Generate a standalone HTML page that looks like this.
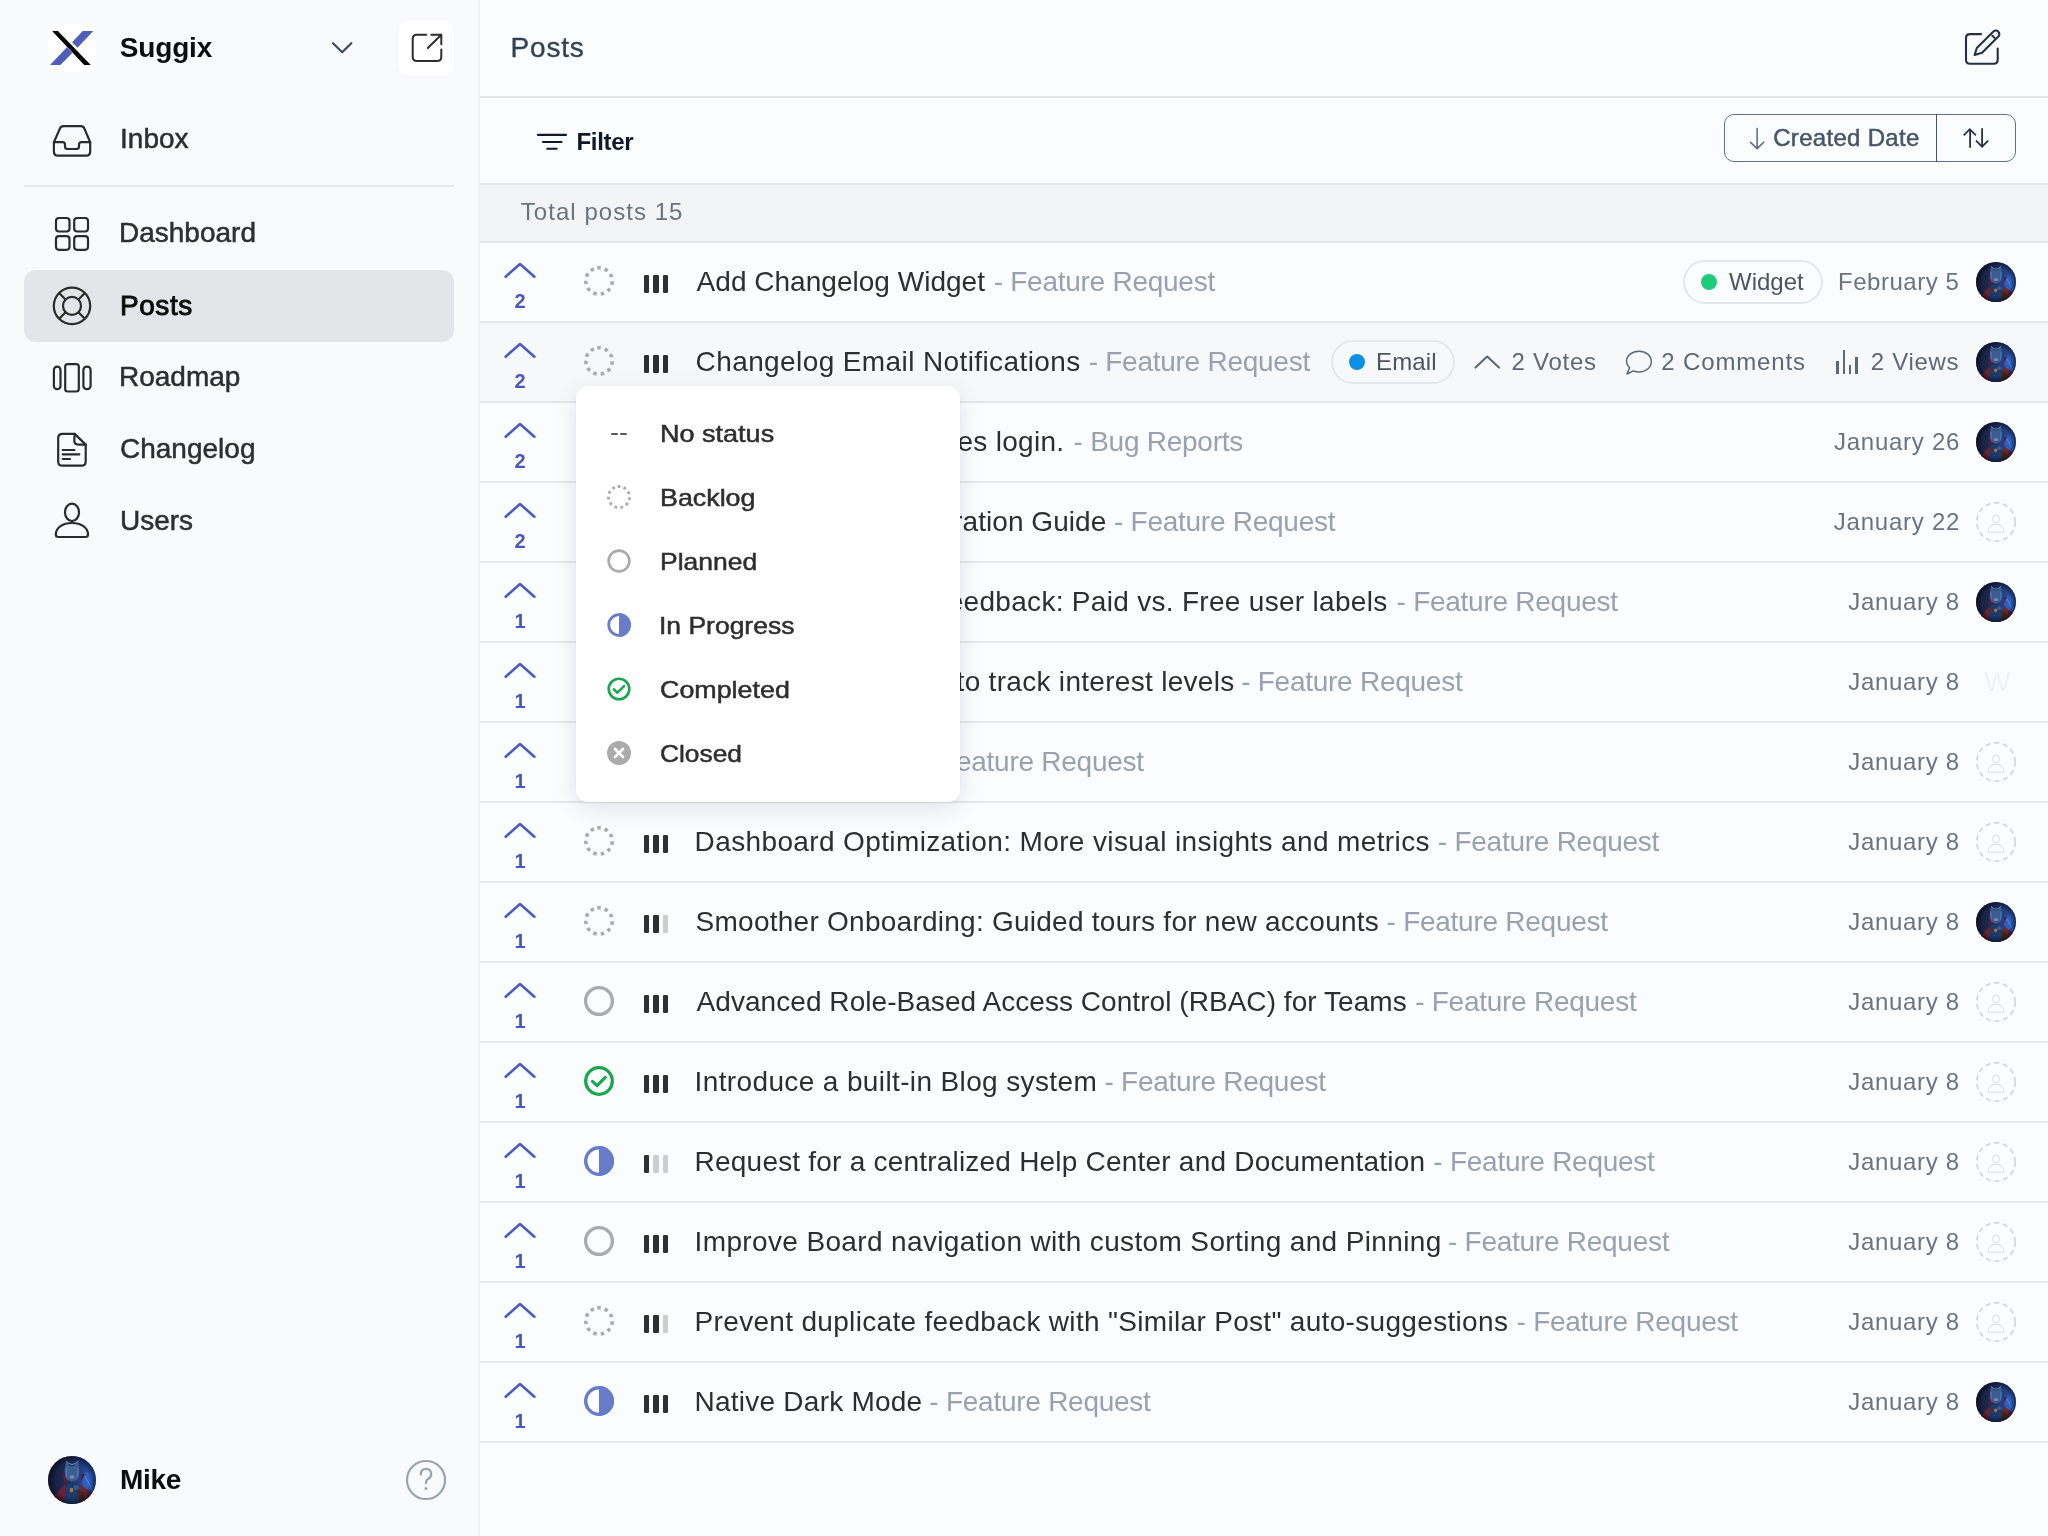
<!DOCTYPE html>
<html><head><meta charset="utf-8"><title>Posts</title>
<style>
*{margin:0;padding:0;box-sizing:border-box}
html,body{width:2048px;height:1536px;overflow:hidden}
body{font-family:"Liberation Sans",sans-serif;background:#fbfcfe;position:relative;color:#333}
.abs{position:absolute}
.t{position:absolute;white-space:nowrap;line-height:1;font-family:"Liberation Sans",sans-serif}
svg{position:absolute;overflow:visible}
.hl{position:absolute;left:480px;width:1568px;height:2px;background:#e5e7eb}
</style></head>
<body><div id="root" style="position:absolute;left:0;top:0;width:2048px;height:1536px;will-change:transform">
<div class="abs" style="left:0;top:0;width:478px;height:1536px;background:#f9fafb"></div>
<div class="abs" style="left:478px;top:0;width:2px;height:1536px;background:#f1f2f4"></div>
<div class="abs" style="left:48px;top:24px;width:48px;height:48px;background:#fff;border-radius:8px"></div>
<svg style="left:0;top:0" width="120" height="90" viewBox="0 0 120 90"><polygon points="52.1,31 57.9,31 90.8,65 84.2,65" fill="#000"/><polygon points="82.7,31 93.3,31 77.5,47.7 72.1,42.25" fill="#4c5fb9"/><polygon points="66.9,47.25 72.3,52.9 60.4,65 50,65" fill="#4c5fb9"/></svg>
<div class="t" style="left:119.70px;top:34px;font-size:28px;font-weight:bold;color:#0d0d0d;letter-spacing:-0.140px;">Suggix</div>
<svg style="left:0;top:0" width="400" height="80"><polyline points="333,43.2 342.2,52.3 351.3,43.2" fill="none" stroke="#3f4b5e" stroke-width="2.2" stroke-linecap="round" stroke-linejoin="round"/></svg>
<div class="abs" style="left:398px;top:20px;width:56px;height:56px;background:#fff;border-radius:10px;box-shadow:0 0 3px rgba(0,0,0,0.05)"></div>
<svg style="left:390px;top:12px" width="72" height="72" viewBox="0 0 72 72" fill="none" stroke="#2e2e2e" stroke-width="2" stroke-linecap="round" stroke-linejoin="round"><path d="M36.3 22.8 L27 22.8 Q22.7 22.8 22.7 27.1 L22.7 44.7 Q22.7 49 27 49 L47 49 Q51.3 49 51.3 44.7 L51.3 37.5"/><path d="M41.3 22.8 L51.3 22.8 L51.3 32.3 M51.3 22.8 L37.8 36"/></svg>
<svg style="left:40px;top:110px" width="60" height="60" viewBox="0 0 60 60" fill="none" stroke="#2b2b2b" stroke-width="2.2" stroke-linecap="round" stroke-linejoin="round"><path d="M13.9 32.2 L20 18.4 Q21 16.2 23.5 16.2 L41 16.2 Q43.4 16.2 44.3 18.4 L50.2 32.2 L50.2 41.5 Q50.2 45.7 46 45.7 L18 45.7 Q13.9 45.7 13.9 41.5 Z"/><path d="M13.9 32.2 L22.5 32.2 Q25 32.2 25 34.7 L25 36.5 Q25 39 27.5 39 L36.5 39 Q39 39 39 36.5 L39 34.7 Q39 32.2 41.5 32.2 L50.2 32.2"/></svg>
<div class="t" style="left:120.10px;top:125px;font-size:28px;-webkit-text-stroke:0.5px #2e2e2e;color:#2e2e2e;letter-spacing:0.000px;">Inbox</div>
<div class="abs" style="left:24px;top:185px;width:430px;height:2px;background:#e5e7eb"></div>
<svg style="left:40px;top:200px" width="60" height="60" viewBox="0 0 60 60" fill="none" stroke="#2b2b2b" stroke-width="2.2"><rect x="16" y="18" width="13.5" height="13.5" rx="3"/><rect x="34.2" y="18" width="13.8" height="13.5" rx="3"/><rect x="16" y="36.2" width="13.5" height="13.6" rx="3"/><rect x="34.2" y="36.2" width="13.8" height="13.6" rx="3"/></svg>
<div class="t" style="left:119.00px;top:219px;font-size:28px;-webkit-text-stroke:0.5px #2e2e2e;color:#2e2e2e;letter-spacing:0.000px;">Dashboard</div>
<div class="abs" style="left:24px;top:270px;width:430px;height:72px;background:#e4e5e9;border-radius:12px"></div>
<svg style="left:40px;top:276px" width="60" height="60" viewBox="0 0 60 60" fill="none" stroke="#2b2b2b" stroke-width="2.2"><circle cx="32" cy="29.9" r="18.2"/><circle cx="32" cy="29.9" r="9"/><path d="M25.6 23.5 L19.1 17 M38.4 23.5 L44.9 17 M25.6 36.3 L19.1 42.8 M38.4 36.3 L44.9 42.8"/></svg>
<div class="t" style="left:120.00px;top:292px;font-size:28px;-webkit-text-stroke:0.9px #0a0a0a;color:#0a0a0a;letter-spacing:0.550px;">Posts</div>
<svg style="left:40px;top:348px" width="60" height="60" viewBox="0 0 60 60" fill="none" stroke="#2b2b2b" stroke-width="2.2"><rect x="13.9" y="18.6" width="6.6" height="22.6" rx="3.3"/><rect x="25.2" y="16.2" width="13.6" height="27.3" rx="2.5"/><rect x="43.4" y="18.6" width="7.2" height="22.6" rx="3.4"/></svg>
<div class="t" style="left:119.00px;top:363px;font-size:28px;-webkit-text-stroke:0.5px #2e2e2e;color:#2e2e2e;letter-spacing:0.000px;">Roadmap</div>
<svg style="left:40px;top:420px" width="60" height="60" viewBox="0 0 60 60" fill="none" stroke="#2b2b2b" stroke-width="2.2" stroke-linecap="round" stroke-linejoin="round"><path d="M34.7 13.9 L22.5 13.9 Q18.2 13.9 18.2 18.2 L18.2 41.4 Q18.2 45.7 22.5 45.7 L41.4 45.7 Q45.7 45.7 45.7 41.4 L45.7 24.6 Z"/><path d="M34.7 13.9 L34.3 20.5 Q34.3 24.6 38.4 24.6 L45.7 24.6"/><path d="M22.7 30 L34.4 30 M22.7 34.4 L39.3 34.4 M22.7 39 L30 39"/></svg>
<div class="t" style="left:120.00px;top:435px;font-size:28px;-webkit-text-stroke:0.5px #2e2e2e;color:#2e2e2e;letter-spacing:0.000px;">Changelog</div>
<svg style="left:40px;top:492px" width="60" height="60" viewBox="0 0 60 60" fill="none" stroke="#2b2b2b" stroke-width="2.2" stroke-linejoin="round"><ellipse cx="32" cy="20.4" rx="7" ry="8.7"/><path d="M15.8 42.5 C15.8 35.5 23 31 32 31 C41 31 48 35.5 48 42.5 Q48 45 45.5 45 L18.3 45 Q15.8 45 15.8 42.5 Z"/></svg>
<div class="t" style="left:120.00px;top:507px;font-size:28px;-webkit-text-stroke:0.5px #2e2e2e;color:#2e2e2e;letter-spacing:0.000px;">Users</div>
<svg style="left:48px;top:1456px" width="48" height="48" viewBox="0 0 48 48"><defs><clipPath id="cme"><circle cx="24" cy="24" r="24"/></clipPath><linearGradient id="gme" x1="0" y1="0" x2="1" y2="0.2"><stop offset="0" stop-color="#141a32"/><stop offset="0.5" stop-color="#1e2b55"/><stop offset="1" stop-color="#2d5cc0"/></linearGradient><radialGradient id="vme" cx="0.5" cy="0.5" r="0.5"><stop offset="0.7" stop-color="#050816" stop-opacity="0"/><stop offset="1" stop-color="#050816" stop-opacity="0.6"/></radialGradient><filter id="fme" x="-20%" y="-20%" width="140%" height="140%"><feGaussianBlur stdDeviation="0.45"/></filter></defs><g clip-path="url(#cme)"><rect width="48" height="48" fill="url(#gme)"/><g filter="url(#fme)"><ellipse cx="40" cy="25" rx="6" ry="9" fill="#2f66cc" opacity="0.7"/><path d="M37 20 L45 35" stroke="#5ab0f0" stroke-width="1" opacity="0.7"/><path d="M5 42 L17 28 L21 48 L6 48 Z" fill="#6a2232"/><path d="M32 28 L44 37 L42 48 L33 48 Z" fill="#6c2536"/><path d="M15 17 L19 18 L20 27 L16 26 Z M33 18 L37 18 L33 26 Z" fill="#5e1f2e"/><path d="M18 4 L21.5 10 L26.5 10 L30 4 L31.5 15 L30 23 L24 26 L18 23 L16.5 15 Z" fill="#3d5d92"/><path d="M18 5 Q24 12 30.5 5" stroke="#62c0ff" stroke-width="0.9" fill="none" opacity="0.85"/><path d="M18.3 12 L18.3 21 M29.8 12 L29.8 21" stroke="#3fa0f0" stroke-width="0.9" opacity="0.7"/><ellipse cx="24" cy="21" rx="2.6" ry="1.8" fill="#a8a0b0" opacity="0.6"/><path d="M18 28 L31 28 L32 48 L16 48 Z" fill="#1f3a6c"/><path d="M30 34 L36 36 L37 46 L31 46 Z" fill="#4a2614"/><ellipse cx="23.5" cy="34" rx="1.8" ry="2.2" fill="#a87a48"/><ellipse cx="28" cy="31.5" rx="2.8" ry="2.4" fill="#37598f"/></g><rect width="48" height="48" fill="url(#vme)"/></g></svg>
<div class="t" style="left:120.00px;top:1466px;font-size:28px;font-weight:bold;color:#0d0d0d;letter-spacing:-0.267px;">Mike</div>
<svg style="left:400px;top:1454px" width="52" height="52" viewBox="0 0 52 52" fill="none" stroke="#9ba3af" stroke-width="2.2" stroke-linecap="round"><circle cx="26" cy="26" r="19"/><path d="M20.8 20.6 Q20.8 14.8 26 14.8 Q31.2 14.8 31.2 20.2 Q31.2 23.4 28 25 Q26 26 26 29"/><circle cx="26" cy="34.6" r="1.5" fill="#9ba3af" stroke="none"/></svg>
<div class="t" style="left:510.50px;top:34px;font-size:28px;-webkit-text-stroke:0.35px #334155;color:#334155;letter-spacing:0.825px;">Posts</div>
<svg style="left:1950px;top:16px" width="64" height="64" viewBox="0 0 64 64" fill="none" stroke="#253042" stroke-width="2.1" stroke-linecap="round" stroke-linejoin="round"><path d="M31 18.1 L20 18.1 Q16 18.1 16 22.1 L16 43.7 Q16 47.7 20 47.7 L43.7 47.7 Q47.7 47.7 47.7 43.7 L47.7 32.5"/><path d="M24.6 39 L26.8 32 L43.4 15.6 A3.3 3.3 0 0 1 48.3 20.6 L32 36.8 Z"/><path d="M42.4 19.8 L44.4 21.8"/></svg>
<div class="hl" style="top:96px"></div>
<svg style="left:526px;top:120px" width="50" height="44" fill="none" stroke="#0f172a" stroke-width="2.1" stroke-linecap="round"><path d="M12 14.9 L40 14.9 M17 22 L35.5 22 M21.3 28.7 L30.7 28.7"/></svg>
<div class="t" style="left:576.50px;top:130px;font-size:24px;font-weight:bold;color:#111827;letter-spacing:-0.340px;">Filter</div>
<div class="abs" style="left:1724px;top:114px;width:292px;height:48px;border:1.2px solid #64708a;border-radius:10px"></div>
<div class="abs" style="left:1936px;top:114px;width:1.2px;height:48px;background:#4b5563"></div>
<svg style="left:1740px;top:120px" width="40" height="40" fill="none" stroke="#5a6474" stroke-width="1.5" stroke-linecap="round" stroke-linejoin="round"><path d="M17.1 8.5 L17.1 28.5 M10.4 22.2 L17.1 28.6 L23.7 22.2"/></svg>
<div class="t" style="left:1773.20px;top:126px;font-size:24px;-webkit-text-stroke:0.5px #475569;color:#475569;letter-spacing:0.309px;">Created Date</div>
<svg style="left:1950px;top:120px" width="50" height="40" fill="none" stroke="#273142" stroke-width="1.8" stroke-linecap="butt" stroke-linejoin="miter"><path d="M20.1 27.8 L20.1 9.5 M13.7 15.3 L19.8 9.2 L25.9 15.3"/><path d="M32.1 8.3 L32.1 26.5 M26 20.6 L32.1 26.7 L38.2 20.6"/></svg>
<div class="hl" style="top:183px"></div>
<div class="abs" style="left:480px;top:185px;width:1568px;height:56px;background:#f3f4f6"></div>
<div class="t" style="left:520.80px;top:200px;font-size:24px;color:#6b7280;letter-spacing:1.038px;">Total posts 15</div>
<div class="hl" style="top:241px"></div>
<div class="hl" style="top:321px"></div>
<svg style="left:500px;top:259px" width="40" height="24" fill="none" stroke="#4a5bc4" stroke-width="2.6" stroke-linecap="round" stroke-linejoin="round"><polyline points="5.6,17.7 20,5 34.4,17.7"/></svg>
<div class="t" style="left:500px;top:291px;width:40px;text-align:center;font-size:20px;font-weight:bold;color:#4856be">2</div>
<svg style="left:582.0px;top:264.0px" width="34" height="34" viewBox="-17.0 -17.0 34 34"><circle cx="0" cy="0" r="13.20" fill="none" stroke="#ababab" stroke-width="3.60" stroke-dasharray="3.50 4.040" transform="rotate(-97.60)"/></svg>
<div class="abs" style="left:643.7px;top:275.2px;width:5.5px;height:17.4px;background:#2f2f2f;border-radius:1px"></div><div class="abs" style="left:653.3px;top:275.2px;width:5.5px;height:17.4px;background:#2f2f2f;border-radius:1px"></div><div class="abs" style="left:662.9px;top:275.2px;width:5.5px;height:17.4px;background:#2f2f2f;border-radius:1px"></div>
<div class="t" style="left:696.60px;top:268px;font-size:28px;color:#2e2e2e;letter-spacing:0.021px;">Add Changelog Widget</div>
<div class="t" style="left:993.66px;top:268px;font-size:28px;color:#9aa1ae;letter-spacing:-0.260px;">- Feature Request</div>
<svg style="left:1976px;top:262px" width="40" height="40" viewBox="0 0 48 48"><defs><clipPath id="cr0"><circle cx="24" cy="24" r="24"/></clipPath><linearGradient id="gr0" x1="0" y1="0" x2="1" y2="0.2"><stop offset="0" stop-color="#141a32"/><stop offset="0.5" stop-color="#1e2b55"/><stop offset="1" stop-color="#2d5cc0"/></linearGradient><radialGradient id="vr0" cx="0.5" cy="0.5" r="0.5"><stop offset="0.7" stop-color="#050816" stop-opacity="0"/><stop offset="1" stop-color="#050816" stop-opacity="0.6"/></radialGradient><filter id="fr0" x="-20%" y="-20%" width="140%" height="140%"><feGaussianBlur stdDeviation="0.54"/></filter></defs><g clip-path="url(#cr0)"><rect width="48" height="48" fill="url(#gr0)"/><g filter="url(#fr0)"><ellipse cx="40" cy="25" rx="6" ry="9" fill="#2f66cc" opacity="0.7"/><path d="M37 20 L45 35" stroke="#5ab0f0" stroke-width="1" opacity="0.7"/><path d="M5 42 L17 28 L21 48 L6 48 Z" fill="#6a2232"/><path d="M32 28 L44 37 L42 48 L33 48 Z" fill="#6c2536"/><path d="M15 17 L19 18 L20 27 L16 26 Z M33 18 L37 18 L33 26 Z" fill="#5e1f2e"/><path d="M18 4 L21.5 10 L26.5 10 L30 4 L31.5 15 L30 23 L24 26 L18 23 L16.5 15 Z" fill="#3d5d92"/><path d="M18 5 Q24 12 30.5 5" stroke="#62c0ff" stroke-width="0.9" fill="none" opacity="0.85"/><path d="M18.3 12 L18.3 21 M29.8 12 L29.8 21" stroke="#3fa0f0" stroke-width="0.9" opacity="0.7"/><ellipse cx="24" cy="21" rx="2.6" ry="1.8" fill="#a8a0b0" opacity="0.6"/><path d="M18 28 L31 28 L32 48 L16 48 Z" fill="#1f3a6c"/><path d="M30 34 L36 36 L37 46 L31 46 Z" fill="#4a2614"/><ellipse cx="23.5" cy="34" rx="1.8" ry="2.2" fill="#a87a48"/><ellipse cx="28" cy="31.5" rx="2.8" ry="2.4" fill="#37598f"/></g><rect width="48" height="48" fill="url(#vr0)"/></g></svg>
<div class="t" style="left:1838.00px;top:270px;font-size:24px;color:#6b7280;letter-spacing:0.522px;">February 5</div>
<div class="abs" style="left:1683px;top:260px;width:139.5px;height:44px;border:2px solid #e5e7eb;border-radius:22px"></div>
<div class="abs" style="left:1701px;top:274px;width:16px;height:16px;border-radius:50%;background:#1ecb7a"></div>
<div class="t" style="left:1729.00px;top:270px;font-size:24px;color:#4b5563;letter-spacing:0.000px;">Widget</div>
<div class="abs" style="left:480px;top:323px;width:1568px;height:78px;background:#f7f8fa"></div>
<div class="hl" style="top:401px"></div>
<svg style="left:500px;top:339px" width="40" height="24" fill="none" stroke="#4a5bc4" stroke-width="2.6" stroke-linecap="round" stroke-linejoin="round"><polyline points="5.6,17.7 20,5 34.4,17.7"/></svg>
<div class="t" style="left:500px;top:371px;width:40px;text-align:center;font-size:20px;font-weight:bold;color:#4856be">2</div>
<svg style="left:582.0px;top:344.0px" width="34" height="34" viewBox="-17.0 -17.0 34 34"><circle cx="0" cy="0" r="13.20" fill="none" stroke="#ababab" stroke-width="3.60" stroke-dasharray="3.50 4.040" transform="rotate(-97.60)"/></svg>
<div class="abs" style="left:643.7px;top:355.2px;width:5.5px;height:17.4px;background:#2f2f2f;border-radius:1px"></div><div class="abs" style="left:653.3px;top:355.2px;width:5.5px;height:17.4px;background:#2f2f2f;border-radius:1px"></div><div class="abs" style="left:662.9px;top:355.2px;width:5.5px;height:17.4px;background:#2f2f2f;border-radius:1px"></div>
<div class="t" style="left:695.60px;top:348px;font-size:28px;color:#2e2e2e;letter-spacing:0.396px;">Changelog Email Notifications</div>
<div class="t" style="left:1088.66px;top:348px;font-size:28px;color:#9aa1ae;letter-spacing:-0.260px;">- Feature Request</div>
<svg style="left:1976px;top:342px" width="40" height="40" viewBox="0 0 48 48"><defs><clipPath id="cr1"><circle cx="24" cy="24" r="24"/></clipPath><linearGradient id="gr1" x1="0" y1="0" x2="1" y2="0.2"><stop offset="0" stop-color="#141a32"/><stop offset="0.5" stop-color="#1e2b55"/><stop offset="1" stop-color="#2d5cc0"/></linearGradient><radialGradient id="vr1" cx="0.5" cy="0.5" r="0.5"><stop offset="0.7" stop-color="#050816" stop-opacity="0"/><stop offset="1" stop-color="#050816" stop-opacity="0.6"/></radialGradient><filter id="fr1" x="-20%" y="-20%" width="140%" height="140%"><feGaussianBlur stdDeviation="0.54"/></filter></defs><g clip-path="url(#cr1)"><rect width="48" height="48" fill="url(#gr1)"/><g filter="url(#fr1)"><ellipse cx="40" cy="25" rx="6" ry="9" fill="#2f66cc" opacity="0.7"/><path d="M37 20 L45 35" stroke="#5ab0f0" stroke-width="1" opacity="0.7"/><path d="M5 42 L17 28 L21 48 L6 48 Z" fill="#6a2232"/><path d="M32 28 L44 37 L42 48 L33 48 Z" fill="#6c2536"/><path d="M15 17 L19 18 L20 27 L16 26 Z M33 18 L37 18 L33 26 Z" fill="#5e1f2e"/><path d="M18 4 L21.5 10 L26.5 10 L30 4 L31.5 15 L30 23 L24 26 L18 23 L16.5 15 Z" fill="#3d5d92"/><path d="M18 5 Q24 12 30.5 5" stroke="#62c0ff" stroke-width="0.9" fill="none" opacity="0.85"/><path d="M18.3 12 L18.3 21 M29.8 12 L29.8 21" stroke="#3fa0f0" stroke-width="0.9" opacity="0.7"/><ellipse cx="24" cy="21" rx="2.6" ry="1.8" fill="#a8a0b0" opacity="0.6"/><path d="M18 28 L31 28 L32 48 L16 48 Z" fill="#1f3a6c"/><path d="M30 34 L36 36 L37 46 L31 46 Z" fill="#4a2614"/><ellipse cx="23.5" cy="34" rx="1.8" ry="2.2" fill="#a87a48"/><ellipse cx="28" cy="31.5" rx="2.8" ry="2.4" fill="#37598f"/></g><rect width="48" height="48" fill="url(#vr1)"/></g></svg>
<div class="abs" style="left:1331px;top:340px;width:123.5px;height:44px;border:2px solid #e5e7eb;border-radius:22px"></div>
<div class="abs" style="left:1349px;top:354px;width:16px;height:16px;border-radius:50%;background:#0e90e2"></div>
<div class="t" style="left:1376.00px;top:350px;font-size:24px;color:#4b5563;letter-spacing:0.125px;">Email</div>
<svg style="left:1470px;top:343px" width="34" height="34" fill="none" stroke="#5f6675" stroke-width="2.1" stroke-linecap="round" stroke-linejoin="round"><polyline points="5.5,24.6 17.2,13.6 29,24.6"/></svg>
<div class="t" style="left:1511.50px;top:350px;font-size:24px;color:#5f6675;letter-spacing:0.733px;">2 Votes</div>
<svg style="left:1620px;top:343px" width="40" height="40" fill="none" stroke="#5f6675" stroke-width="1.5" stroke-linejoin="round"><path d="M9.6 24.8 C7.5 22.8 6.5 20.6 6.5 18.6 C6.5 12.6 12 8.3 19 8.3 C26 8.3 31.3 12.6 31.3 18.6 C31.3 24.6 26 29 19 29 C17 29 15 28.6 13.4 27.8 L7 31 Z"/></svg>
<div class="t" style="left:1661.30px;top:350px;font-size:24px;color:#5f6675;letter-spacing:0.856px;">2 Comments</div>
<div class="abs" style="left:1836px;top:361px;width:3px;height:13px;background:#5f6675"></div>
<div class="abs" style="left:1843px;top:350px;width:2.2px;height:24px;background:#5f6675"></div>
<div class="abs" style="left:1849px;top:365px;width:2.2px;height:9px;background:#5f6675"></div>
<div class="abs" style="left:1855px;top:357px;width:3px;height:17px;background:#5f6675"></div>
<div class="t" style="left:1870.80px;top:350px;font-size:24px;color:#5f6675;letter-spacing:0.700px;">2 Views</div>
<div class="hl" style="top:481px"></div>
<svg style="left:500px;top:419px" width="40" height="24" fill="none" stroke="#4a5bc4" stroke-width="2.6" stroke-linecap="round" stroke-linejoin="round"><polyline points="5.6,17.7 20,5 34.4,17.7"/></svg>
<div class="t" style="left:500px;top:451px;width:40px;text-align:center;font-size:20px;font-weight:bold;color:#4856be">2</div>
<div class="t" style="left:493.50px;top:428px;font-size:28px;color:#2e2e2e;letter-spacing:0.300px;clip-path:inset(-10px -10px -10px 206.5px);">Passwordless magic link that simplifies login.</div>
<div class="t" style="left:1073.62px;top:428px;font-size:28px;color:#9aa1ae;letter-spacing:-0.260px;clip-path:inset(-10px -10px -10px 0.0px);">- Bug Reports</div>
<svg style="left:1976px;top:422px" width="40" height="40" viewBox="0 0 48 48"><defs><clipPath id="cr2"><circle cx="24" cy="24" r="24"/></clipPath><linearGradient id="gr2" x1="0" y1="0" x2="1" y2="0.2"><stop offset="0" stop-color="#141a32"/><stop offset="0.5" stop-color="#1e2b55"/><stop offset="1" stop-color="#2d5cc0"/></linearGradient><radialGradient id="vr2" cx="0.5" cy="0.5" r="0.5"><stop offset="0.7" stop-color="#050816" stop-opacity="0"/><stop offset="1" stop-color="#050816" stop-opacity="0.6"/></radialGradient><filter id="fr2" x="-20%" y="-20%" width="140%" height="140%"><feGaussianBlur stdDeviation="0.54"/></filter></defs><g clip-path="url(#cr2)"><rect width="48" height="48" fill="url(#gr2)"/><g filter="url(#fr2)"><ellipse cx="40" cy="25" rx="6" ry="9" fill="#2f66cc" opacity="0.7"/><path d="M37 20 L45 35" stroke="#5ab0f0" stroke-width="1" opacity="0.7"/><path d="M5 42 L17 28 L21 48 L6 48 Z" fill="#6a2232"/><path d="M32 28 L44 37 L42 48 L33 48 Z" fill="#6c2536"/><path d="M15 17 L19 18 L20 27 L16 26 Z M33 18 L37 18 L33 26 Z" fill="#5e1f2e"/><path d="M18 4 L21.5 10 L26.5 10 L30 4 L31.5 15 L30 23 L24 26 L18 23 L16.5 15 Z" fill="#3d5d92"/><path d="M18 5 Q24 12 30.5 5" stroke="#62c0ff" stroke-width="0.9" fill="none" opacity="0.85"/><path d="M18.3 12 L18.3 21 M29.8 12 L29.8 21" stroke="#3fa0f0" stroke-width="0.9" opacity="0.7"/><ellipse cx="24" cy="21" rx="2.6" ry="1.8" fill="#a8a0b0" opacity="0.6"/><path d="M18 28 L31 28 L32 48 L16 48 Z" fill="#1f3a6c"/><path d="M30 34 L36 36 L37 46 L31 46 Z" fill="#4a2614"/><ellipse cx="23.5" cy="34" rx="1.8" ry="2.2" fill="#a87a48"/><ellipse cx="28" cy="31.5" rx="2.8" ry="2.4" fill="#37598f"/></g><rect width="48" height="48" fill="url(#vr2)"/></g></svg>
<div class="t" style="left:1834.00px;top:430px;font-size:24px;color:#6b7280;letter-spacing:0.744px;">January 26</div>
<div class="hl" style="top:561px"></div>
<svg style="left:500px;top:499px" width="40" height="24" fill="none" stroke="#4a5bc4" stroke-width="2.6" stroke-linecap="round" stroke-linejoin="round"><polyline points="5.6,17.7 20,5 34.4,17.7"/></svg>
<div class="t" style="left:500px;top:531px;width:40px;text-align:center;font-size:20px;font-weight:bold;color:#4856be">2</div>
<div class="t" style="left:703.20px;top:508px;font-size:28px;color:#2e2e2e;letter-spacing:0.050px;clip-path:inset(-10px -10px -10px 0.0px);">Developer API Integration Guide</div>
<div class="t" style="left:1113.96px;top:508px;font-size:28px;color:#9aa1ae;letter-spacing:-0.260px;clip-path:inset(-10px -10px -10px 0.0px);">- Feature Request</div>
<svg style="left:1975px;top:501px" width="42" height="42" viewBox="0 0 42 42" fill="none"><circle cx="21" cy="21" r="19.2" stroke="#d3d6dc" stroke-width="1.8" stroke-dasharray="5.2 3.6"/><ellipse cx="21" cy="18" rx="3.3" ry="3.8" stroke="#dadde2" stroke-width="1.1"/><path d="M13 30.4 C13 26 16.5 23.3 21 23.3 C25.5 23.3 29 26 29 30.4 Q29 31.2 28.2 31.2 L13.8 31.2 Q13 31.2 13 30.4 Z" stroke="#dadde2" stroke-width="1.1"/></svg>
<div class="t" style="left:1833.75px;top:510px;font-size:24px;color:#6b7280;letter-spacing:0.772px;">January 22</div>
<div class="hl" style="top:641px"></div>
<svg style="left:500px;top:579px" width="40" height="24" fill="none" stroke="#4a5bc4" stroke-width="2.6" stroke-linecap="round" stroke-linejoin="round"><polyline points="5.6,17.7 20,5 34.4,17.7"/></svg>
<div class="t" style="left:500px;top:611px;width:40px;text-align:center;font-size:20px;font-weight:bold;color:#4856be">1</div>
<div class="t" style="left:817.40px;top:588px;font-size:28px;color:#2e2e2e;letter-spacing:0.300px;clip-path:inset(-10px -10px -10px 0.0px);">Segment feedback: Paid vs. Free user labels</div>
<div class="t" style="left:1396.56px;top:588px;font-size:28px;color:#9aa1ae;letter-spacing:-0.260px;clip-path:inset(-10px -10px -10px 0.0px);">- Feature Request</div>
<svg style="left:1976px;top:582px" width="40" height="40" viewBox="0 0 48 48"><defs><clipPath id="cr4"><circle cx="24" cy="24" r="24"/></clipPath><linearGradient id="gr4" x1="0" y1="0" x2="1" y2="0.2"><stop offset="0" stop-color="#141a32"/><stop offset="0.5" stop-color="#1e2b55"/><stop offset="1" stop-color="#2d5cc0"/></linearGradient><radialGradient id="vr4" cx="0.5" cy="0.5" r="0.5"><stop offset="0.7" stop-color="#050816" stop-opacity="0"/><stop offset="1" stop-color="#050816" stop-opacity="0.6"/></radialGradient><filter id="fr4" x="-20%" y="-20%" width="140%" height="140%"><feGaussianBlur stdDeviation="0.54"/></filter></defs><g clip-path="url(#cr4)"><rect width="48" height="48" fill="url(#gr4)"/><g filter="url(#fr4)"><ellipse cx="40" cy="25" rx="6" ry="9" fill="#2f66cc" opacity="0.7"/><path d="M37 20 L45 35" stroke="#5ab0f0" stroke-width="1" opacity="0.7"/><path d="M5 42 L17 28 L21 48 L6 48 Z" fill="#6a2232"/><path d="M32 28 L44 37 L42 48 L33 48 Z" fill="#6c2536"/><path d="M15 17 L19 18 L20 27 L16 26 Z M33 18 L37 18 L33 26 Z" fill="#5e1f2e"/><path d="M18 4 L21.5 10 L26.5 10 L30 4 L31.5 15 L30 23 L24 26 L18 23 L16.5 15 Z" fill="#3d5d92"/><path d="M18 5 Q24 12 30.5 5" stroke="#62c0ff" stroke-width="0.9" fill="none" opacity="0.85"/><path d="M18.3 12 L18.3 21 M29.8 12 L29.8 21" stroke="#3fa0f0" stroke-width="0.9" opacity="0.7"/><ellipse cx="24" cy="21" rx="2.6" ry="1.8" fill="#a8a0b0" opacity="0.6"/><path d="M18 28 L31 28 L32 48 L16 48 Z" fill="#1f3a6c"/><path d="M30 34 L36 36 L37 46 L31 46 Z" fill="#4a2614"/><ellipse cx="23.5" cy="34" rx="1.8" ry="2.2" fill="#a87a48"/><ellipse cx="28" cy="31.5" rx="2.8" ry="2.4" fill="#37598f"/></g><rect width="48" height="48" fill="url(#vr4)"/></g></svg>
<div class="t" style="left:1848.30px;top:590px;font-size:24px;color:#6b7280;letter-spacing:0.675px;">January 8</div>
<div class="hl" style="top:721px"></div>
<svg style="left:500px;top:659px" width="40" height="24" fill="none" stroke="#4a5bc4" stroke-width="2.6" stroke-linecap="round" stroke-linejoin="round"><polyline points="5.6,17.7 20,5 34.4,17.7"/></svg>
<div class="t" style="left:500px;top:691px;width:40px;text-align:center;font-size:20px;font-weight:bold;color:#4856be">1</div>
<div class="t" style="left:835.60px;top:668px;font-size:28px;color:#2e2e2e;letter-spacing:0.300px;clip-path:inset(-10px -10px -10px 0.0px);">Upvoting to track interest levels</div>
<div class="t" style="left:1241.16px;top:668px;font-size:28px;color:#9aa1ae;letter-spacing:-0.260px;clip-path:inset(-10px -10px -10px 0.0px);">- Feature Request</div>
<div class="t" style="left:1984px;top:668px;font-size:28px;color:#f2f2f2">W</div>
<div class="t" style="left:1848.30px;top:670px;font-size:24px;color:#6b7280;letter-spacing:0.675px;">January 8</div>
<div class="hl" style="top:801px"></div>
<svg style="left:500px;top:739px" width="40" height="24" fill="none" stroke="#4a5bc4" stroke-width="2.6" stroke-linecap="round" stroke-linejoin="round"><polyline points="5.6,17.7 20,5 34.4,17.7"/></svg>
<div class="t" style="left:500px;top:771px;width:40px;text-align:center;font-size:20px;font-weight:bold;color:#4856be">1</div>
<div class="t" style="left:780.50px;top:748px;font-size:28px;color:#2e2e2e;letter-spacing:0.300px;clip-path:inset(-10px -10px -10px 0.0px);">Webhooks</div>
<div class="t" style="left:922.56px;top:748px;font-size:28px;color:#9aa1ae;letter-spacing:-0.260px;clip-path:inset(-10px -10px -10px 0.0px);">- Feature Request</div>
<svg style="left:1975px;top:741px" width="42" height="42" viewBox="0 0 42 42" fill="none"><circle cx="21" cy="21" r="19.2" stroke="#d3d6dc" stroke-width="1.8" stroke-dasharray="5.2 3.6"/><ellipse cx="21" cy="18" rx="3.3" ry="3.8" stroke="#dadde2" stroke-width="1.1"/><path d="M13 30.4 C13 26 16.5 23.3 21 23.3 C25.5 23.3 29 26 29 30.4 Q29 31.2 28.2 31.2 L13.8 31.2 Q13 31.2 13 30.4 Z" stroke="#dadde2" stroke-width="1.1"/></svg>
<div class="t" style="left:1848.30px;top:750px;font-size:24px;color:#6b7280;letter-spacing:0.675px;">January 8</div>
<div class="hl" style="top:881px"></div>
<svg style="left:500px;top:819px" width="40" height="24" fill="none" stroke="#4a5bc4" stroke-width="2.6" stroke-linecap="round" stroke-linejoin="round"><polyline points="5.6,17.7 20,5 34.4,17.7"/></svg>
<div class="t" style="left:500px;top:851px;width:40px;text-align:center;font-size:20px;font-weight:bold;color:#4856be">1</div>
<svg style="left:582.0px;top:824.0px" width="34" height="34" viewBox="-17.0 -17.0 34 34"><circle cx="0" cy="0" r="13.20" fill="none" stroke="#ababab" stroke-width="3.60" stroke-dasharray="3.50 4.040" transform="rotate(-97.60)"/></svg>
<div class="abs" style="left:643.7px;top:835.2px;width:5.5px;height:17.4px;background:#2f2f2f;border-radius:1px"></div><div class="abs" style="left:653.3px;top:835.2px;width:5.5px;height:17.4px;background:#2f2f2f;border-radius:1px"></div><div class="abs" style="left:662.9px;top:835.2px;width:5.5px;height:17.4px;background:#2f2f2f;border-radius:1px"></div>
<div class="t" style="left:694.60px;top:828px;font-size:28px;color:#2e2e2e;letter-spacing:0.375px;">Dashboard Optimization: More visual insights and metrics</div>
<div class="t" style="left:1437.86px;top:828px;font-size:28px;color:#9aa1ae;letter-spacing:-0.260px;">- Feature Request</div>
<svg style="left:1975px;top:821px" width="42" height="42" viewBox="0 0 42 42" fill="none"><circle cx="21" cy="21" r="19.2" stroke="#d3d6dc" stroke-width="1.8" stroke-dasharray="5.2 3.6"/><ellipse cx="21" cy="18" rx="3.3" ry="3.8" stroke="#dadde2" stroke-width="1.1"/><path d="M13 30.4 C13 26 16.5 23.3 21 23.3 C25.5 23.3 29 26 29 30.4 Q29 31.2 28.2 31.2 L13.8 31.2 Q13 31.2 13 30.4 Z" stroke="#dadde2" stroke-width="1.1"/></svg>
<div class="t" style="left:1848.30px;top:830px;font-size:24px;color:#6b7280;letter-spacing:0.675px;">January 8</div>
<div class="hl" style="top:961px"></div>
<svg style="left:500px;top:899px" width="40" height="24" fill="none" stroke="#4a5bc4" stroke-width="2.6" stroke-linecap="round" stroke-linejoin="round"><polyline points="5.6,17.7 20,5 34.4,17.7"/></svg>
<div class="t" style="left:500px;top:931px;width:40px;text-align:center;font-size:20px;font-weight:bold;color:#4856be">1</div>
<svg style="left:582.0px;top:904.0px" width="34" height="34" viewBox="-17.0 -17.0 34 34"><circle cx="0" cy="0" r="13.20" fill="none" stroke="#ababab" stroke-width="3.60" stroke-dasharray="3.50 4.040" transform="rotate(-97.60)"/></svg>
<div class="abs" style="left:643.7px;top:915.2px;width:5.5px;height:17.4px;background:#2f2f2f;border-radius:1px"></div><div class="abs" style="left:653.3px;top:915.2px;width:5.5px;height:17.4px;background:#2f2f2f;border-radius:1px"></div><div class="abs" style="left:662.9px;top:915.2px;width:5.5px;height:17.4px;background:#cdcdcd;border-radius:1px"></div>
<div class="t" style="left:695.60px;top:908px;font-size:28px;color:#2e2e2e;letter-spacing:0.253px;">Smoother Onboarding: Guided tours for new accounts</div>
<div class="t" style="left:1386.56px;top:908px;font-size:28px;color:#9aa1ae;letter-spacing:-0.260px;">- Feature Request</div>
<svg style="left:1976px;top:902px" width="40" height="40" viewBox="0 0 48 48"><defs><clipPath id="cr8"><circle cx="24" cy="24" r="24"/></clipPath><linearGradient id="gr8" x1="0" y1="0" x2="1" y2="0.2"><stop offset="0" stop-color="#141a32"/><stop offset="0.5" stop-color="#1e2b55"/><stop offset="1" stop-color="#2d5cc0"/></linearGradient><radialGradient id="vr8" cx="0.5" cy="0.5" r="0.5"><stop offset="0.7" stop-color="#050816" stop-opacity="0"/><stop offset="1" stop-color="#050816" stop-opacity="0.6"/></radialGradient><filter id="fr8" x="-20%" y="-20%" width="140%" height="140%"><feGaussianBlur stdDeviation="0.54"/></filter></defs><g clip-path="url(#cr8)"><rect width="48" height="48" fill="url(#gr8)"/><g filter="url(#fr8)"><ellipse cx="40" cy="25" rx="6" ry="9" fill="#2f66cc" opacity="0.7"/><path d="M37 20 L45 35" stroke="#5ab0f0" stroke-width="1" opacity="0.7"/><path d="M5 42 L17 28 L21 48 L6 48 Z" fill="#6a2232"/><path d="M32 28 L44 37 L42 48 L33 48 Z" fill="#6c2536"/><path d="M15 17 L19 18 L20 27 L16 26 Z M33 18 L37 18 L33 26 Z" fill="#5e1f2e"/><path d="M18 4 L21.5 10 L26.5 10 L30 4 L31.5 15 L30 23 L24 26 L18 23 L16.5 15 Z" fill="#3d5d92"/><path d="M18 5 Q24 12 30.5 5" stroke="#62c0ff" stroke-width="0.9" fill="none" opacity="0.85"/><path d="M18.3 12 L18.3 21 M29.8 12 L29.8 21" stroke="#3fa0f0" stroke-width="0.9" opacity="0.7"/><ellipse cx="24" cy="21" rx="2.6" ry="1.8" fill="#a8a0b0" opacity="0.6"/><path d="M18 28 L31 28 L32 48 L16 48 Z" fill="#1f3a6c"/><path d="M30 34 L36 36 L37 46 L31 46 Z" fill="#4a2614"/><ellipse cx="23.5" cy="34" rx="1.8" ry="2.2" fill="#a87a48"/><ellipse cx="28" cy="31.5" rx="2.8" ry="2.4" fill="#37598f"/></g><rect width="48" height="48" fill="url(#vr8)"/></g></svg>
<div class="t" style="left:1848.30px;top:910px;font-size:24px;color:#6b7280;letter-spacing:0.675px;">January 8</div>
<div class="hl" style="top:1041px"></div>
<svg style="left:500px;top:979px" width="40" height="24" fill="none" stroke="#4a5bc4" stroke-width="2.6" stroke-linecap="round" stroke-linejoin="round"><polyline points="5.6,17.7 20,5 34.4,17.7"/></svg>
<div class="t" style="left:500px;top:1011px;width:40px;text-align:center;font-size:20px;font-weight:bold;color:#4856be">1</div>
<svg style="left:582.0px;top:984.0px" width="34" height="34" viewBox="-17.0 -17.0 34 34"><circle cx="0" cy="0" r="13.4" fill="none" stroke="#ababab" stroke-width="3.30"/></svg>
<div class="abs" style="left:643.7px;top:995.2px;width:5.5px;height:17.4px;background:#2f2f2f;border-radius:1px"></div><div class="abs" style="left:653.3px;top:995.2px;width:5.5px;height:17.4px;background:#2f2f2f;border-radius:1px"></div><div class="abs" style="left:662.9px;top:995.2px;width:5.5px;height:17.4px;background:#2f2f2f;border-radius:1px"></div>
<div class="t" style="left:696.60px;top:988px;font-size:28px;color:#2e2e2e;letter-spacing:0.050px;">Advanced Role-Based Access Control (RBAC) for Teams</div>
<div class="t" style="left:1415.16px;top:988px;font-size:28px;color:#9aa1ae;letter-spacing:-0.260px;">- Feature Request</div>
<svg style="left:1975px;top:981px" width="42" height="42" viewBox="0 0 42 42" fill="none"><circle cx="21" cy="21" r="19.2" stroke="#d3d6dc" stroke-width="1.8" stroke-dasharray="5.2 3.6"/><ellipse cx="21" cy="18" rx="3.3" ry="3.8" stroke="#dadde2" stroke-width="1.1"/><path d="M13 30.4 C13 26 16.5 23.3 21 23.3 C25.5 23.3 29 26 29 30.4 Q29 31.2 28.2 31.2 L13.8 31.2 Q13 31.2 13 30.4 Z" stroke="#dadde2" stroke-width="1.1"/></svg>
<div class="t" style="left:1848.30px;top:990px;font-size:24px;color:#6b7280;letter-spacing:0.675px;">January 8</div>
<div class="hl" style="top:1121px"></div>
<svg style="left:500px;top:1059px" width="40" height="24" fill="none" stroke="#4a5bc4" stroke-width="2.6" stroke-linecap="round" stroke-linejoin="round"><polyline points="5.6,17.7 20,5 34.4,17.7"/></svg>
<div class="t" style="left:500px;top:1091px;width:40px;text-align:center;font-size:20px;font-weight:bold;color:#4856be">1</div>
<svg style="left:582.0px;top:1064.0px" width="34" height="34" viewBox="-17.0 -17.0 34 34"><circle cx="0" cy="0" r="13.3" fill="none" stroke="#1aa650" stroke-width="3.30"/><path d="M-6.50 0.40 L-1.90 4.60 L6.30 -3.60" fill="none" stroke="#1aa650" stroke-width="3.20" stroke-linecap="round" stroke-linejoin="round"/></svg>
<div class="abs" style="left:643.7px;top:1075.2px;width:5.5px;height:17.4px;background:#2f2f2f;border-radius:1px"></div><div class="abs" style="left:653.3px;top:1075.2px;width:5.5px;height:17.4px;background:#2f2f2f;border-radius:1px"></div><div class="abs" style="left:662.9px;top:1075.2px;width:5.5px;height:17.4px;background:#2f2f2f;border-radius:1px"></div>
<div class="t" style="left:694.60px;top:1068px;font-size:28px;color:#2e2e2e;letter-spacing:0.371px;">Introduce a built-in Blog system</div>
<div class="t" style="left:1104.46px;top:1068px;font-size:28px;color:#9aa1ae;letter-spacing:-0.260px;">- Feature Request</div>
<svg style="left:1975px;top:1061px" width="42" height="42" viewBox="0 0 42 42" fill="none"><circle cx="21" cy="21" r="19.2" stroke="#d3d6dc" stroke-width="1.8" stroke-dasharray="5.2 3.6"/><ellipse cx="21" cy="18" rx="3.3" ry="3.8" stroke="#dadde2" stroke-width="1.1"/><path d="M13 30.4 C13 26 16.5 23.3 21 23.3 C25.5 23.3 29 26 29 30.4 Q29 31.2 28.2 31.2 L13.8 31.2 Q13 31.2 13 30.4 Z" stroke="#dadde2" stroke-width="1.1"/></svg>
<div class="t" style="left:1848.30px;top:1070px;font-size:24px;color:#6b7280;letter-spacing:0.675px;">January 8</div>
<div class="hl" style="top:1201px"></div>
<svg style="left:500px;top:1139px" width="40" height="24" fill="none" stroke="#4a5bc4" stroke-width="2.6" stroke-linecap="round" stroke-linejoin="round"><polyline points="5.6,17.7 20,5 34.4,17.7"/></svg>
<div class="t" style="left:500px;top:1171px;width:40px;text-align:center;font-size:20px;font-weight:bold;color:#4856be">1</div>
<svg style="left:582.0px;top:1144.0px" width="34" height="34" viewBox="-17.0 -17.0 34 34"><circle cx="0" cy="0" r="13.3" fill="none" stroke="#687dca" stroke-width="3.45"/><path d="M0 -15.0 A15.0 15.0 0 0 1 0 15.0 Z" fill="#687dca"/></svg>
<div class="abs" style="left:643.7px;top:1155.2px;width:5.5px;height:17.4px;background:#2f2f2f;border-radius:1px"></div><div class="abs" style="left:653.3px;top:1155.2px;width:5.5px;height:17.4px;background:#cdcdcd;border-radius:1px"></div><div class="abs" style="left:662.9px;top:1155.2px;width:5.5px;height:17.4px;background:#cdcdcd;border-radius:1px"></div>
<div class="t" style="left:694.60px;top:1148px;font-size:28px;color:#2e2e2e;letter-spacing:0.211px;">Request for a centralized Help Center and Documentation</div>
<div class="t" style="left:1433.36px;top:1148px;font-size:28px;color:#9aa1ae;letter-spacing:-0.260px;">- Feature Request</div>
<svg style="left:1975px;top:1141px" width="42" height="42" viewBox="0 0 42 42" fill="none"><circle cx="21" cy="21" r="19.2" stroke="#d3d6dc" stroke-width="1.8" stroke-dasharray="5.2 3.6"/><ellipse cx="21" cy="18" rx="3.3" ry="3.8" stroke="#dadde2" stroke-width="1.1"/><path d="M13 30.4 C13 26 16.5 23.3 21 23.3 C25.5 23.3 29 26 29 30.4 Q29 31.2 28.2 31.2 L13.8 31.2 Q13 31.2 13 30.4 Z" stroke="#dadde2" stroke-width="1.1"/></svg>
<div class="t" style="left:1848.30px;top:1150px;font-size:24px;color:#6b7280;letter-spacing:0.675px;">January 8</div>
<div class="hl" style="top:1281px"></div>
<svg style="left:500px;top:1219px" width="40" height="24" fill="none" stroke="#4a5bc4" stroke-width="2.6" stroke-linecap="round" stroke-linejoin="round"><polyline points="5.6,17.7 20,5 34.4,17.7"/></svg>
<div class="t" style="left:500px;top:1251px;width:40px;text-align:center;font-size:20px;font-weight:bold;color:#4856be">1</div>
<svg style="left:582.0px;top:1224.0px" width="34" height="34" viewBox="-17.0 -17.0 34 34"><circle cx="0" cy="0" r="13.4" fill="none" stroke="#ababab" stroke-width="3.30"/></svg>
<div class="abs" style="left:643.7px;top:1235.2px;width:5.5px;height:17.4px;background:#2f2f2f;border-radius:1px"></div><div class="abs" style="left:653.3px;top:1235.2px;width:5.5px;height:17.4px;background:#2f2f2f;border-radius:1px"></div><div class="abs" style="left:662.9px;top:1235.2px;width:5.5px;height:17.4px;background:#2f2f2f;border-radius:1px"></div>
<div class="t" style="left:694.60px;top:1228px;font-size:28px;color:#2e2e2e;letter-spacing:0.360px;">Improve Board navigation with custom Sorting and Pinning</div>
<div class="t" style="left:1447.96px;top:1228px;font-size:28px;color:#9aa1ae;letter-spacing:-0.260px;">- Feature Request</div>
<svg style="left:1975px;top:1221px" width="42" height="42" viewBox="0 0 42 42" fill="none"><circle cx="21" cy="21" r="19.2" stroke="#d3d6dc" stroke-width="1.8" stroke-dasharray="5.2 3.6"/><ellipse cx="21" cy="18" rx="3.3" ry="3.8" stroke="#dadde2" stroke-width="1.1"/><path d="M13 30.4 C13 26 16.5 23.3 21 23.3 C25.5 23.3 29 26 29 30.4 Q29 31.2 28.2 31.2 L13.8 31.2 Q13 31.2 13 30.4 Z" stroke="#dadde2" stroke-width="1.1"/></svg>
<div class="t" style="left:1848.30px;top:1230px;font-size:24px;color:#6b7280;letter-spacing:0.675px;">January 8</div>
<div class="hl" style="top:1361px"></div>
<svg style="left:500px;top:1299px" width="40" height="24" fill="none" stroke="#4a5bc4" stroke-width="2.6" stroke-linecap="round" stroke-linejoin="round"><polyline points="5.6,17.7 20,5 34.4,17.7"/></svg>
<div class="t" style="left:500px;top:1331px;width:40px;text-align:center;font-size:20px;font-weight:bold;color:#4856be">1</div>
<svg style="left:582.0px;top:1304.0px" width="34" height="34" viewBox="-17.0 -17.0 34 34"><circle cx="0" cy="0" r="13.20" fill="none" stroke="#ababab" stroke-width="3.60" stroke-dasharray="3.50 4.040" transform="rotate(-97.60)"/></svg>
<div class="abs" style="left:643.7px;top:1315.2px;width:5.5px;height:17.4px;background:#2f2f2f;border-radius:1px"></div><div class="abs" style="left:653.3px;top:1315.2px;width:5.5px;height:17.4px;background:#2f2f2f;border-radius:1px"></div><div class="abs" style="left:662.9px;top:1315.2px;width:5.5px;height:17.4px;background:#cdcdcd;border-radius:1px"></div>
<div class="t" style="left:694.60px;top:1308px;font-size:28px;color:#2e2e2e;letter-spacing:0.321px;">Prevent duplicate feedback with "Similar Post" auto-suggestions</div>
<div class="t" style="left:1516.56px;top:1308px;font-size:28px;color:#9aa1ae;letter-spacing:-0.260px;">- Feature Request</div>
<svg style="left:1975px;top:1301px" width="42" height="42" viewBox="0 0 42 42" fill="none"><circle cx="21" cy="21" r="19.2" stroke="#d3d6dc" stroke-width="1.8" stroke-dasharray="5.2 3.6"/><ellipse cx="21" cy="18" rx="3.3" ry="3.8" stroke="#dadde2" stroke-width="1.1"/><path d="M13 30.4 C13 26 16.5 23.3 21 23.3 C25.5 23.3 29 26 29 30.4 Q29 31.2 28.2 31.2 L13.8 31.2 Q13 31.2 13 30.4 Z" stroke="#dadde2" stroke-width="1.1"/></svg>
<div class="t" style="left:1848.30px;top:1310px;font-size:24px;color:#6b7280;letter-spacing:0.675px;">January 8</div>
<div class="hl" style="top:1441px"></div>
<svg style="left:500px;top:1379px" width="40" height="24" fill="none" stroke="#4a5bc4" stroke-width="2.6" stroke-linecap="round" stroke-linejoin="round"><polyline points="5.6,17.7 20,5 34.4,17.7"/></svg>
<div class="t" style="left:500px;top:1411px;width:40px;text-align:center;font-size:20px;font-weight:bold;color:#4856be">1</div>
<svg style="left:582.0px;top:1384.0px" width="34" height="34" viewBox="-17.0 -17.0 34 34"><circle cx="0" cy="0" r="13.3" fill="none" stroke="#687dca" stroke-width="3.45"/><path d="M0 -15.0 A15.0 15.0 0 0 1 0 15.0 Z" fill="#687dca"/></svg>
<div class="abs" style="left:643.7px;top:1395.2px;width:5.5px;height:17.4px;background:#2f2f2f;border-radius:1px"></div><div class="abs" style="left:653.3px;top:1395.2px;width:5.5px;height:17.4px;background:#2f2f2f;border-radius:1px"></div><div class="abs" style="left:662.9px;top:1395.2px;width:5.5px;height:17.4px;background:#2f2f2f;border-radius:1px"></div>
<div class="t" style="left:694.60px;top:1388px;font-size:28px;color:#2e2e2e;letter-spacing:0.233px;">Native Dark Mode</div>
<div class="t" style="left:929.36px;top:1388px;font-size:28px;color:#9aa1ae;letter-spacing:-0.260px;">- Feature Request</div>
<svg style="left:1976px;top:1382px" width="40" height="40" viewBox="0 0 48 48"><defs><clipPath id="cr14"><circle cx="24" cy="24" r="24"/></clipPath><linearGradient id="gr14" x1="0" y1="0" x2="1" y2="0.2"><stop offset="0" stop-color="#141a32"/><stop offset="0.5" stop-color="#1e2b55"/><stop offset="1" stop-color="#2d5cc0"/></linearGradient><radialGradient id="vr14" cx="0.5" cy="0.5" r="0.5"><stop offset="0.7" stop-color="#050816" stop-opacity="0"/><stop offset="1" stop-color="#050816" stop-opacity="0.6"/></radialGradient><filter id="fr14" x="-20%" y="-20%" width="140%" height="140%"><feGaussianBlur stdDeviation="0.54"/></filter></defs><g clip-path="url(#cr14)"><rect width="48" height="48" fill="url(#gr14)"/><g filter="url(#fr14)"><ellipse cx="40" cy="25" rx="6" ry="9" fill="#2f66cc" opacity="0.7"/><path d="M37 20 L45 35" stroke="#5ab0f0" stroke-width="1" opacity="0.7"/><path d="M5 42 L17 28 L21 48 L6 48 Z" fill="#6a2232"/><path d="M32 28 L44 37 L42 48 L33 48 Z" fill="#6c2536"/><path d="M15 17 L19 18 L20 27 L16 26 Z M33 18 L37 18 L33 26 Z" fill="#5e1f2e"/><path d="M18 4 L21.5 10 L26.5 10 L30 4 L31.5 15 L30 23 L24 26 L18 23 L16.5 15 Z" fill="#3d5d92"/><path d="M18 5 Q24 12 30.5 5" stroke="#62c0ff" stroke-width="0.9" fill="none" opacity="0.85"/><path d="M18.3 12 L18.3 21 M29.8 12 L29.8 21" stroke="#3fa0f0" stroke-width="0.9" opacity="0.7"/><ellipse cx="24" cy="21" rx="2.6" ry="1.8" fill="#a8a0b0" opacity="0.6"/><path d="M18 28 L31 28 L32 48 L16 48 Z" fill="#1f3a6c"/><path d="M30 34 L36 36 L37 46 L31 46 Z" fill="#4a2614"/><ellipse cx="23.5" cy="34" rx="1.8" ry="2.2" fill="#a87a48"/><ellipse cx="28" cy="31.5" rx="2.8" ry="2.4" fill="#37598f"/></g><rect width="48" height="48" fill="url(#vr14)"/></g></svg>
<div class="t" style="left:1848.30px;top:1390px;font-size:24px;color:#6b7280;letter-spacing:0.675px;">January 8</div>
<div class="hl" style="top:1441px"></div>
<div class="abs" style="left:576px;top:386px;width:384px;height:416px;background:#fff;border-radius:12px;box-shadow:0 6px 24px rgba(17,24,39,0.10),0 1px 4px rgba(17,24,39,0.05)"></div>
<div class="abs" style="left:611.3px;top:433px;width:6.8px;height:2.2px;background:#595959;border-radius:1px"></div>
<div class="abs" style="left:620.3px;top:433px;width:6.7px;height:2.2px;background:#595959;border-radius:1px"></div>
<div class="t" style="left:659.77px;top:422px;font-size:24px;-webkit-text-stroke:0.5px #2e2e2e;color:#2e2e2e;letter-spacing:0.000px;transform:scaleX(1.1260);transform-origin:0 0;">No status</div>
<svg style="left:605.0px;top:483.0px" width="28" height="28" viewBox="-14.0 -14.0 28 28"><circle cx="0" cy="0" r="10.56" fill="none" stroke="#ababab" stroke-width="2.88" stroke-dasharray="2.80 3.232" transform="rotate(-97.60)"/></svg>
<div class="t" style="left:659.78px;top:486px;font-size:24px;-webkit-text-stroke:0.5px #2e2e2e;color:#2e2e2e;letter-spacing:0.000px;transform:scaleX(1.1179);transform-origin:0 0;">Backlog</div>
<svg style="left:605.0px;top:547.0px" width="28" height="28" viewBox="-14.0 -14.0 28 28"><circle cx="0" cy="0" r="10.4" fill="none" stroke="#ababab" stroke-width="2.64"/></svg>
<div class="t" style="left:659.80px;top:550px;font-size:24px;-webkit-text-stroke:0.5px #2e2e2e;color:#2e2e2e;letter-spacing:0.000px;transform:scaleX(1.1023);transform-origin:0 0;">Planned</div>
<svg style="left:605.0px;top:611.0px" width="28" height="28" viewBox="-14.0 -14.0 28 28"><circle cx="0" cy="0" r="10.3" fill="none" stroke="#687dca" stroke-width="2.76"/><path d="M0 -12.0 A12.0 12.0 0 0 1 0 12.0 Z" fill="#687dca"/></svg>
<div class="t" style="left:658.69px;top:614px;font-size:24px;-webkit-text-stroke:0.5px #2e2e2e;color:#2e2e2e;letter-spacing:0.000px;transform:scaleX(1.1033);transform-origin:0 0;">In Progress</div>
<svg style="left:605.0px;top:675.0px" width="28" height="28" viewBox="-14.0 -14.0 28 28"><circle cx="0" cy="0" r="10.3" fill="none" stroke="#1aa650" stroke-width="2.64"/><path d="M-5.20 0.32 L-1.52 3.68 L5.04 -2.88" fill="none" stroke="#1aa650" stroke-width="2.56" stroke-linecap="round" stroke-linejoin="round"/></svg>
<div class="t" style="left:659.78px;top:678px;font-size:24px;-webkit-text-stroke:0.5px #2e2e2e;color:#2e2e2e;letter-spacing:0.000px;transform:scaleX(1.1184);transform-origin:0 0;">Completed</div>
<svg style="left:607.0px;top:741.0px" width="24" height="24" viewBox="-12.0 -12.0 24 24"><circle cx="0" cy="0" r="12.0" fill="#ababab"/><path d="M-4.00 -4.00 L4.00 4.00 M4.00 -4.00 L-4.00 4.00" stroke="#fff" stroke-width="2.60" stroke-linecap="round"/></svg>
<div class="t" style="left:659.80px;top:742px;font-size:24px;-webkit-text-stroke:0.5px #2e2e2e;color:#2e2e2e;letter-spacing:0.000px;transform:scaleX(1.0973);transform-origin:0 0;">Closed</div>
</div></body></html>
